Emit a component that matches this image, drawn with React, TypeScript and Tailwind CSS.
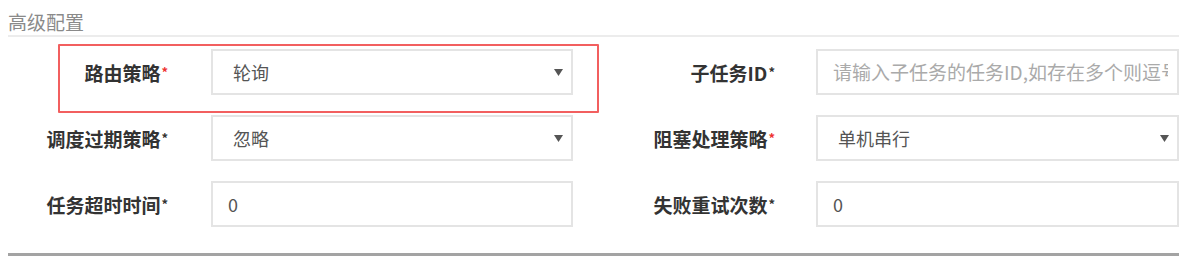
const font = { fontFamily: '"Noto Sans CJK SC", "Noto Sans", sans-serif' };

function Caret() {
  return (
    <svg width="9" height="7" viewBox="0 0 9 7" className="shrink-0">
      <path d="M0 0 L9 0 L4.5 7 Z" fill="#555" />
    </svg>
  );
}

function Label({ text, red, className }: { text: string; red?: boolean; className: string }) {
  return (
    <div className={`w-[160px] shrink-0 text-right text-[19px] font-bold text-[#333] leading-none ${className}`}>
      {text}
      <span className={`relative -top-[4px] ml-[1px] text-[13px] ${red ? "text-[#e33]" : "text-[#333]"}`}>*</span>
    </div>
  );
}

function Select({ value, className, width }: { value: string; className: string; width: string }) {
  return (
    <div
      className={`${width} ${className} h-[46px] shrink-0 flex items-center justify-between border-2 border-[#e4e4e4] pl-[20px] pr-[8px] text-[18px] text-[#555]`}
    >
      <span>{value}</span>
      <Caret />
    </div>
  );
}

function Field({ value, placeholder, className, width }: { value?: string; placeholder?: string; className: string; width: string }) {
  return (
    <div
      className={`${width} ${className} h-[46px] shrink-0 flex items-center border-2 border-[#e4e4e4] pl-[15px] pr-[9px]`}
    >
      <span className={`overflow-hidden whitespace-nowrap ${value ? "text-[18px] text-[#555]" : "text-[19px] text-[#aaa]"}`}>
        {value ?? placeholder}
      </span>
    </div>
  );
}

export default function App() {
  return (
    <div className="relative w-[1186px] h-[262px] bg-white overflow-hidden" style={font}>
      <div className="pl-[8px] w-[1179px]">
        <div className="pt-[11px] h-[37px] text-[19px] leading-[22px] text-[#8a8a8a] border-b-2 border-[#ececec]">
          高级配置
        </div>

        <div className="mt-[12px] flex flex-col gap-[20px]">
          <div className="flex items-center">
            <Label text="路由策略" red className="" />
            <Select value="轮询" className="ml-[43px]" width="w-[362px]" />
            <Label text="子任务ID" className="ml-[42px]" />
            <Field placeholder="请输入子任务的任务ID,如存在多个则逗号分隔" className="ml-[41px]" width="w-[363px]" />
          </div>
          <div className="flex items-center">
            <Label text="调度过期策略" className="" />
            <Select value="忽略" className="ml-[43px]" width="w-[362px]" />
            <Label text="阻塞处理策略" red className="ml-[42px]" />
            <Select value="单机串行" className="ml-[41px]" width="w-[363px]" />
          </div>
          <div className="flex items-center">
            <Label text="任务超时时间" className="" />
            <Field value="0" className="ml-[43px]" width="w-[362px]" />
            <Label text="失败重试次数" className="ml-[42px]" />
            <Field value="0" className="ml-[41px]" width="w-[363px]" />
          </div>
        </div>

        <div className="mt-[26px] h-[3px] bg-[#a3a3a3]" />
      </div>

      {/* highlight annotation over the first field */}
      <div className="absolute left-[58px] top-[44px] w-[541px] h-[69px] border-2 border-[#f25f5f] rounded-[1px] pointer-events-none" />
    </div>
  );
}
